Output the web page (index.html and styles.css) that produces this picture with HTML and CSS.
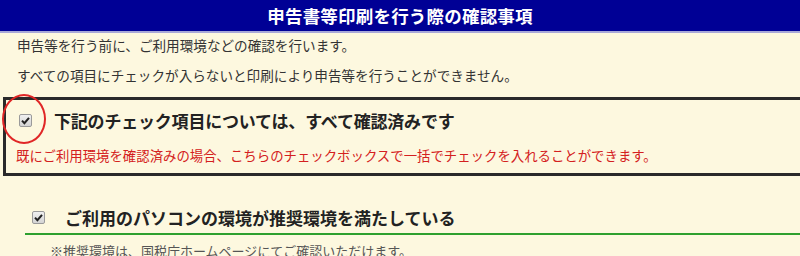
FILE: index.html
```html
<!DOCTYPE html>
<html lang="ja">
<head>
<meta charset="utf-8">
<link rel="stylesheet" href="styles.css">
</head>
<body>
<header class="title">申告書等印刷を行う際の確認事項</header>
<div class="intro">
  <p class="line">申告等を行う前に、ご利用環境などの確認を行います。</p>
  <p class="line">すべての項目にチェックが入らないと印刷により申告等を行うことができません。</p>
</div>
<div class="allbox">
  <div class="allrow">
    <span class="mark">
      <span class="cb"><svg viewBox="0 0 13 13" width="13" height="13"><path d="M3 6.6 L5.4 9.2 L10 3.8" fill="none" stroke="#222" stroke-width="2"/></svg></span>
      <span class="ring"></span>
    </span>
    <span class="allhead">下記のチェック項目については、すべて確認済みです</span>
  </div>
  <p class="note">既にご利用環境を確認済みの場合、こちらのチェックボックスで一括でチェックを入れることができます。</p>
</div>
<section class="item">
  <div class="itemhead">
    <span class="cb"><svg viewBox="0 0 13 13" width="13" height="13"><path d="M3 6.6 L5.4 9.2 L10 3.8" fill="none" stroke="#222" stroke-width="2"/></svg></span>
    <span class="itemtitle">ご利用のパソコンの環境が推奨環境を満たしている</span>
  </div>
  <p class="itemtext">※推奨環境は、国税庁ホームページにてご確認いただけます。</p>
</section>
</body>
</html>
```
FILE: styles.css
```css
html, body {
  margin: 0;
  padding: 0;
  overflow: hidden;
}
body {
  background: #fdf8df;
  font-family: "Noto Sans CJK JP", "Noto Sans", sans-serif;
  color: #333;
}
.title {
  background: #000095;
  color: #fff;
  height: 31px;
  border-bottom: 2px solid #a8a8d8;
  display: flex;
  align-items: center;
  justify-content: center;
  font-size: 17.5px;
  font-weight: bold;
  letter-spacing: 0.2px;
}
.intro {
  padding: 0 0 0 17px;
  display: flex;
  flex-direction: column;
  gap: 6px;
}
.line {
  margin: 0;
  font-size: 13.6px;
  line-height: 24px;
}
.allbox {
  margin: 10px -12px 0 3px;
  border: 3px solid #2a2a2a;
  padding: 5px 0 8px 0;
}
.allrow {
  display: flex;
  align-items: center;
  height: 30px;
}
.mark {
  position: relative;
  margin-left: 13px;
  display: flex;
}
.cb {
  width: 13px;
  height: 13px;
  box-sizing: border-box;
  border: 1px solid #9a9a9a;
  border-radius: 2px;
  background: linear-gradient(#f0f0f0, #d4d4d4);
  display: inline-flex;
}
.cb svg {
  margin: -1px;
}
.ring {
  position: absolute;
  left: -17px;
  top: -20px;
  width: 40px;
  height: 46px;
  border: 2px solid #e02626;
  border-radius: 50%;
}
.allhead {
  margin-left: 22px;
  font-size: 17px;
  font-weight: bold;
  color: #222;
  letter-spacing: -0.2px;
}
.note {
  margin: 10px 0 0 10px;
  font-size: 13.4px;
  line-height: 20px;
  color: #d42020;
}
.item {
  padding: 25px 0 0 25px;
}
.itemhead {
  display: flex;
  align-items: center;
  height: 32px;
  border-bottom: 2px solid #2ea02e;
  padding-left: 7px;
}
.itemtitle {
  margin-left: 20px;
  font-size: 17px;
  font-weight: bold;
  color: #222;
}
.itemtext {
  margin: 6px 0 0 25px;
  font-size: 13px;
  line-height: 20px;
  color: #555;
}
```
